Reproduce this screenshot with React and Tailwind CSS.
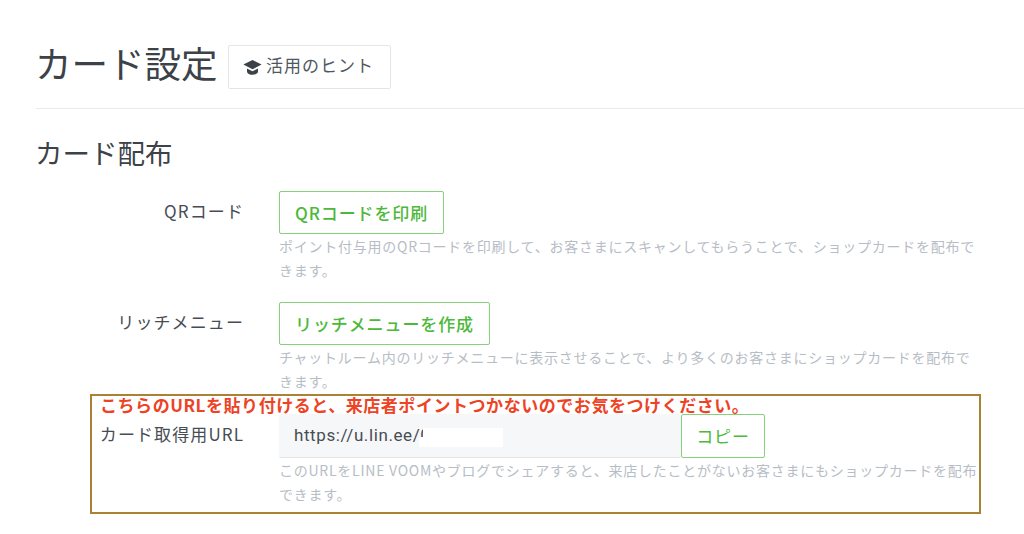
const font = { fontFamily: '"Noto Sans CJK JP", "Noto Sans", sans-serif' };

const Row = ({ label, children, help, className }) => (
  <div className={`flex ${className}`}>
    <div className="w-[208px] shrink-0 text-right text-[17px] leading-[24px] pt-[8px] tracking-[1.1px] text-[#474d54]">{label}</div>
    <div className="ml-[35px] w-[700px]">
      {children}
      <p className="mt-0 whitespace-nowrap text-[14px] leading-[24px] tracking-[0.75px] text-[#b7bdc6]">{help}</p>
    </div>
  </div>
);

const GreenButton = ({ children }) => (
  <button className="h-[43px] px-[15px] border border-[#85d27a] rounded-[2px] bg-white text-[17px] tracking-[0.9px] font-medium text-[#4cb93a]">
    {children}
  </button>
);

const CapIcon = () => (
  <svg viewBox="0 0 19 16" className="w-[19px] h-[16px] mr-[4px] fill-[#3c4248]">
    <path d="M9.5 1 18.6 5.6 9.5 10.2 .4 5.6Z" />
    <path d="M4 9.4 9.5 12.2 15 9.4V12.4C15 14.4 12.2 15.8 9.5 15.8S4 14.4 4 12.4Z" />
  </svg>
);

export default function App() {
  return (
    <div style={font} className="relative w-[1024px] h-[534px] overflow-hidden bg-white pl-[36px] pt-[45px]">
      <div className="flex items-center h-[44px]">
        <h1 className="-ml-[1px] text-[36.5px] leading-[44px] pb-[8px] h-[52px] font-normal text-[#3c4248]">カード設定</h1>
        <button className="ml-[10.5px] flex items-center h-[44px] w-[163px] pl-[14px] border border-[#e3e5e8] rounded-[2px] bg-white text-[17px] tracking-[1px] text-[#4f565e]">
          <CapIcon />
          <span className="-mt-[4px]">活用のヒント</span>
        </button>
      </div>
      <div className="mt-[19px] h-px bg-[#e9eaec]" />
      <h2 className="-ml-[1px] mt-[25px] text-[27.5px] leading-[36px] font-normal text-[#3c4248]">カード配布</h2>

      <div className="mt-[21px]">
        <Row
          label="QRコード"
          help={<>ポイント付与用のQRコードを印刷して、お客さまにスキャンしてもらうことで、ショップカードを配布で<br />きます。</>}
        >
          <GreenButton>QRコードを印刷</GreenButton>
        </Row>
        <Row
          className="mt-[20px]"
          label="リッチメニュー"
          help={<>チャットルーム内のリッチメニューに表示させることで、より多くのお客さまにショップカードを配布で<br />きます。</>}
        >
          <GreenButton>リッチメニューを作成</GreenButton>
        </Row>
        <Row
          className="mt-[21px]"
          label="カード取得用URL"
          help={<>このURLをLINE VOOMやブログでシェアすると、来店したことがないお客さまにもショップカードを配布<br />できます。</>}
        >
          <div className="flex h-[44px]">
            <div className="w-[402px] flex items-center pl-[15px] bg-[#f6f7f9] border-b border-[#e3e5e8] rounded-[2px] text-[17px] tracking-[0.6px] text-[#474d54]" style={{ fontFamily: 'Roboto, sans-serif' }}>
              https://u.lin.ee/0
            </div>
            <button className="w-[84px] border border-[#85d27a] rounded-[2px] bg-white text-[17px] tracking-[0.8px] text-[#4cb93a]">コピー</button>
          </div>
        </Row>
      </div>

      {/* redaction over the url, leaves a sliver of the next character */}
      <div className="absolute left-[423px] top-[428px] w-[80px] h-[19px] bg-white" />
      <div className="absolute left-[419px] top-[437px] w-[10px] h-[10px] bg-white" />

      {/* annotation box drawn on top of the page */}
      <div className="absolute left-[90px] top-[394px] w-[891px] h-[120px] border-2 border-[#ab8233]">
        <p className="ml-[8px] -mt-[1px] text-[17px] leading-[20px] font-bold tracking-[0.55px] text-[#ee4225]">
          こちらのURLを貼り付けると、来店者ポイントつかないのでお気をつけください。
        </p>
      </div>
    </div>
  );
}
